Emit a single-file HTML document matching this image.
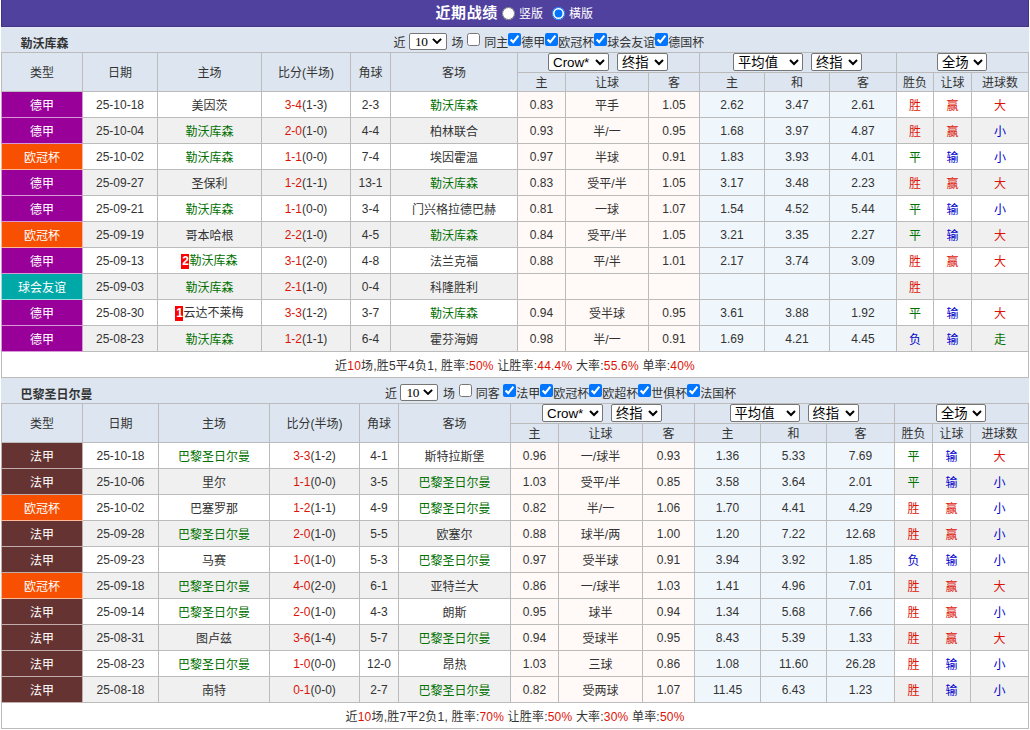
<!DOCTYPE html>
<html lang="zh-CN"><head><meta charset="utf-8"><title>近期战绩</title>
<style>
html,body{margin:0;padding:0;background:#fff;}
body{width:1030px;font-family:"Liberation Sans","Noto Sans CJK SC",sans-serif;font-size:12px;color:#333;}
.title{height:26px;width:1026px;margin-left:1px;border:1px solid #433480;border-top:0;background:#51419f;color:#fff;font-size:12px;position:relative;}
.title b{position:absolute;left:433.5px;top:2px;font-size:15px;line-height:22px;letter-spacing:0.6px;}
.title input{position:absolute;margin:0;width:13px;height:13px;top:6.5px;}
.title .r1{left:500px;}
.title .r2{left:550px;}
.title span{position:absolute;top:5px;line-height:18px;}
.title .l1t{left:517px;}
.title .l2t{left:567px;}
.bar{height:25px;background:#dde6f0;position:relative;margin:0 1px;box-sizing:border-box;}
.bar.first{border-top:1px solid #e6e6fa;}
.bar.first .tn{margin-top:-1px;}
.bar.first .f{margin-top:-1px;}
.bar .tn{position:absolute;left:19.5px;top:8.5px;font-weight:bold;color:#333;line-height:16px;}
.bar .f{position:absolute;top:8px;line-height:17px;white-space:nowrap;}
.bar input{margin:0;vertical-align:top;width:13px;height:13px;position:relative;top:-2px;}
.bar .c0{margin:0 4px 0 3.7px;}
select{font-size:13.33px;padding:0;margin:0;height:18px;box-sizing:border-box;border:1px solid #767676;border-radius:2px;background:#fff;color:#000;font-family:"Liberation Sans","Noto Sans CJK SC",sans-serif;}
.s0{display:inline-block;box-sizing:border-box;width:38px;height:17px;margin:0 5px 0 3px;vertical-align:top;position:relative;top:-2px;border:1px solid #767676;border-radius:2px;background:#fff;color:#000;}
.s0 span{position:absolute;left:5.5px;top:-1px;letter-spacing:-0.4px;font:13.33px/17px "Liberation Serif",serif;}
.s0 svg{position:absolute;left:22px;top:3.5px;}
.s1{width:61px;margin-right:8px;}
.s2{width:51px;}
.s3{width:70px;margin-right:8px;}
.s4{width:50px;}
table.t{border-collapse:collapse;table-layout:fixed;width:1028px;margin-left:1px;}
table.t td,table.t th{border:1px solid #bbb;text-align:center;padding:0;font-weight:normal;height:25px;overflow:hidden;white-space:nowrap;}
table.t th{background:#dde6f0;}
table.t td{height:25px;padding-bottom:0px;}
tr.h1 th[rowspan]{padding-bottom:2px;}
tr.h1 th{height:19px;}
tr.h1 th select{position:relative;top:-0.5px;left:-0.5px;}
tr.h2 th{height:16px;line-height:16px;padding-top:2px;}
tr.alt td{background:#f0f0f0;}
table.t td.o1{background:#fffaf7;}
table.t td.o2{background:#f0f7fc;}
table.t td.l1{background:#990099;color:#fff;border-color:#d699d6;}
table.t td.l2{background:#f75000;color:#fff;border-color:#fcb999;}
table.t td.l3{background:#00a8a8;color:#fff;border-color:#a1dcdc;}
table.t td.l4{background:#663333;color:#fff;border-color:#c2adad;}
.r{color:#dc1408;}
.gn{color:#007000;}
.b{color:#0000cc;}
.cd{background:#f00;color:#fff;font-weight:bold;display:inline-block;width:8px;height:15px;line-height:15px;vertical-align:middle;position:relative;top:-0.5px;}
tr.sum td{height:25px;background:#fff;letter-spacing:0.2px;}
.gap{height:0;}

</style></head><body>
<div class="title"><b>近期战绩</b><input type="radio" name="v" class="r1"><span class="l1t">竖版</span><input type="radio" name="v" class="r2" checked><span class="l2t">橫版</span></div>
<div class="bar first"><span class="tn">勒沃库森</span><span class="f" style="left:392.5px">近<span class="s0"><span>10</span><svg width="10" height="6" viewBox="0 0 10 6"><path d="M0.9 0.9 L5 4.9 L9.1 0.9" fill="none" stroke="#000" stroke-width="2"/></svg></span>场<input type="checkbox" class="c0"><span class="sd" style="margin-right:0px">同主</span><input type="checkbox" checked>德甲<input type="checkbox" checked>欧冠杯<input type="checkbox" checked>球会友谊<input type="checkbox" checked>德国杯</span></div>
<table class="t" id="t1"><colgroup><col style="width:81px"><col style="width:75px"><col style="width:104px"><col style="width:89px"><col style="width:40px"><col style="width:127px"><col style="width:48px"><col style="width:83px"><col style="width:51px"><col style="width:65px"><col style="width:65px"><col style="width:67px"><col style="width:37px"><col style="width:38px"><col style="width:57px"></colgroup>
<tr class="h1"><th rowspan="2">类型</th><th rowspan="2">日期</th><th rowspan="2">主场</th><th rowspan="2">比分(半场)</th><th rowspan="2">角球</th><th rowspan="2">客场</th><th colspan="3"><select class="s1"><option>Crow*</option></select><select class="s2"><option>终指</option></select></th><th colspan="3"><select class="s3"><option>平均值</option></select><select class="s2"><option>终指</option></select></th><th colspan="3"><select class="s4"><option>全场</option></select></th></tr>
<tr class="h2"><th>主</th><th>让球</th><th>客</th><th>主</th><th>和</th><th>客</th><th>胜负</th><th>让球</th><th>进球数</th></tr>
<tr><td class="l1">德甲</td><td>25-10-18</td><td>美因茨</td><td><span class="r">3-4</span>(1-3)</td><td>2-3</td><td><span class="gn">勒沃库森</span></td><td class="o1">0.83</td><td class="o1">平手</td><td class="o1">1.05</td><td class="o2">2.62</td><td class="o2">3.47</td><td class="o2">2.61</td><td class="r">胜</td><td class="r">赢</td><td class="r">大</td></tr>
<tr class="alt"><td class="l1">德甲</td><td>25-10-04</td><td><span class="gn">勒沃库森</span></td><td><span class="r">2-0</span>(1-0)</td><td>4-4</td><td>柏林联合</td><td class="o1">0.93</td><td class="o1">半/一</td><td class="o1">0.95</td><td class="o2">1.68</td><td class="o2">3.97</td><td class="o2">4.87</td><td class="r">胜</td><td class="r">赢</td><td class="b">小</td></tr>
<tr><td class="l2">欧冠杯</td><td>25-10-02</td><td><span class="gn">勒沃库森</span></td><td><span class="r">1-1</span>(0-0)</td><td>7-4</td><td>埃因霍温</td><td class="o1">0.97</td><td class="o1">半球</td><td class="o1">0.91</td><td class="o2">1.83</td><td class="o2">3.93</td><td class="o2">4.01</td><td class="gn">平</td><td class="b">输</td><td class="b">小</td></tr>
<tr class="alt"><td class="l1">德甲</td><td>25-09-27</td><td>圣保利</td><td><span class="r">1-2</span>(1-1)</td><td>13-1</td><td><span class="gn">勒沃库森</span></td><td class="o1">0.83</td><td class="o1">受平/半</td><td class="o1">1.05</td><td class="o2">3.17</td><td class="o2">3.48</td><td class="o2">2.23</td><td class="r">胜</td><td class="r">赢</td><td class="r">大</td></tr>
<tr><td class="l1">德甲</td><td>25-09-21</td><td><span class="gn">勒沃库森</span></td><td><span class="r">1-1</span>(0-0)</td><td>3-4</td><td>门兴格拉德巴赫</td><td class="o1">0.81</td><td class="o1">一球</td><td class="o1">1.07</td><td class="o2">1.54</td><td class="o2">4.52</td><td class="o2">5.44</td><td class="gn">平</td><td class="b">输</td><td class="b">小</td></tr>
<tr class="alt"><td class="l2">欧冠杯</td><td>25-09-19</td><td>哥本哈根</td><td><span class="r">2-2</span>(1-0)</td><td>4-5</td><td><span class="gn">勒沃库森</span></td><td class="o1">0.84</td><td class="o1">受平/半</td><td class="o1">1.05</td><td class="o2">3.21</td><td class="o2">3.35</td><td class="o2">2.27</td><td class="gn">平</td><td class="b">输</td><td class="r">大</td></tr>
<tr><td class="l1">德甲</td><td>25-09-13</td><td><span class="cd">2</span><span class="gn">勒沃库森</span></td><td><span class="r">3-1</span>(2-0)</td><td>4-8</td><td>法兰克福</td><td class="o1">0.88</td><td class="o1">平/半</td><td class="o1">1.01</td><td class="o2">2.17</td><td class="o2">3.74</td><td class="o2">3.09</td><td class="r">胜</td><td class="r">赢</td><td class="r">大</td></tr>
<tr class="alt"><td class="l3">球会友谊</td><td>25-09-03</td><td><span class="gn">勒沃库森</span></td><td><span class="r">2-1</span>(1-0)</td><td>0-4</td><td>科隆胜利</td><td class="o1"></td><td class="o1"></td><td class="o1"></td><td class="o2"></td><td class="o2"></td><td class="o2"></td><td class="r">胜</td><td></td><td></td></tr>
<tr><td class="l1">德甲</td><td>25-08-30</td><td><span class="cd">1</span>云达不莱梅</td><td><span class="r">3-3</span>(1-2)</td><td>3-7</td><td><span class="gn">勒沃库森</span></td><td class="o1">0.94</td><td class="o1">受半球</td><td class="o1">0.95</td><td class="o2">3.61</td><td class="o2">3.88</td><td class="o2">1.92</td><td class="gn">平</td><td class="b">输</td><td class="r">大</td></tr>
<tr class="alt"><td class="l1">德甲</td><td>25-08-23</td><td><span class="gn">勒沃库森</span></td><td><span class="r">1-2</span>(1-1)</td><td>6-4</td><td>霍芬海姆</td><td class="o1">0.98</td><td class="o1">半/一</td><td class="o1">0.91</td><td class="o2">1.69</td><td class="o2">4.21</td><td class="o2">4.45</td><td class="b">负</td><td class="b">输</td><td class="gn">走</td></tr>
<tr class="sum"><td colspan="15">近<span class="r">10</span>场,胜5平4负1, 胜率:<span class="r">50%</span> 让胜率:<span class="r">44.4%</span> 大率:<span class="r">55.6%</span> 单率:<span class="r">40%</span></td></tr></table>
<div class="gap"></div>
<div class="bar"><span class="tn">巴黎圣日尔曼</span><span class="f" style="left:384px">近<span class="s0"><span>10</span><svg width="10" height="6" viewBox="0 0 10 6"><path d="M0.9 0.9 L5 4.9 L9.1 0.9" fill="none" stroke="#000" stroke-width="2"/></svg></span>场<input type="checkbox" class="c0"><span class="sd" style="margin-right:3.5px">同客</span><input type="checkbox" checked>法甲<input type="checkbox" checked>欧冠杯<input type="checkbox" checked>欧超杯<input type="checkbox" checked>世俱杯<input type="checkbox" checked>法国杯</span></div>
<table class="t" id="t2"><colgroup><col style="width:81px"><col style="width:76px"><col style="width:111px"><col style="width:90px"><col style="width:39px"><col style="width:112px"><col style="width:48px"><col style="width:84px"><col style="width:52px"><col style="width:66px"><col style="width:66px"><col style="width:68px"><col style="width:38px"><col style="width:38px"><col style="width:58px"></colgroup>
<tr class="h1"><th rowspan="2">类型</th><th rowspan="2">日期</th><th rowspan="2">主场</th><th rowspan="2">比分(半场)</th><th rowspan="2">角球</th><th rowspan="2">客场</th><th colspan="3"><select class="s1"><option>Crow*</option></select><select class="s2"><option>终指</option></select></th><th colspan="3"><select class="s3"><option>平均值</option></select><select class="s2"><option>终指</option></select></th><th colspan="3"><select class="s4"><option>全场</option></select></th></tr>
<tr class="h2"><th>主</th><th>让球</th><th>客</th><th>主</th><th>和</th><th>客</th><th>胜负</th><th>让球</th><th>进球数</th></tr>
<tr><td class="l4">法甲</td><td>25-10-18</td><td><span class="gn">巴黎圣日尔曼</span></td><td><span class="r">3-3</span>(1-2)</td><td>4-1</td><td>斯特拉斯堡</td><td class="o1">0.96</td><td class="o1">一/球半</td><td class="o1">0.93</td><td class="o2">1.36</td><td class="o2">5.33</td><td class="o2">7.69</td><td class="gn">平</td><td class="b">输</td><td class="r">大</td></tr>
<tr class="alt"><td class="l4">法甲</td><td>25-10-06</td><td>里尔</td><td><span class="r">1-1</span>(0-0)</td><td>3-5</td><td><span class="gn">巴黎圣日尔曼</span></td><td class="o1">1.03</td><td class="o1">受平/半</td><td class="o1">0.85</td><td class="o2">3.58</td><td class="o2">3.64</td><td class="o2">2.01</td><td class="gn">平</td><td class="b">输</td><td class="b">小</td></tr>
<tr><td class="l2">欧冠杯</td><td>25-10-02</td><td>巴塞罗那</td><td><span class="r">1-2</span>(1-1)</td><td>4-9</td><td><span class="gn">巴黎圣日尔曼</span></td><td class="o1">0.82</td><td class="o1">半/一</td><td class="o1">1.06</td><td class="o2">1.70</td><td class="o2">4.41</td><td class="o2">4.29</td><td class="r">胜</td><td class="r">赢</td><td class="b">小</td></tr>
<tr class="alt"><td class="l4">法甲</td><td>25-09-28</td><td><span class="gn">巴黎圣日尔曼</span></td><td><span class="r">2-0</span>(1-0)</td><td>5-5</td><td>欧塞尔</td><td class="o1">0.88</td><td class="o1">球半/两</td><td class="o1">1.00</td><td class="o2">1.20</td><td class="o2">7.22</td><td class="o2">12.68</td><td class="r">胜</td><td class="r">赢</td><td class="b">小</td></tr>
<tr><td class="l4">法甲</td><td>25-09-23</td><td>马赛</td><td><span class="r">1-0</span>(1-0)</td><td>5-3</td><td><span class="gn">巴黎圣日尔曼</span></td><td class="o1">0.97</td><td class="o1">受半球</td><td class="o1">0.91</td><td class="o2">3.94</td><td class="o2">3.92</td><td class="o2">1.85</td><td class="b">负</td><td class="b">输</td><td class="b">小</td></tr>
<tr class="alt"><td class="l2">欧冠杯</td><td>25-09-18</td><td><span class="gn">巴黎圣日尔曼</span></td><td><span class="r">4-0</span>(2-0)</td><td>6-1</td><td>亚特兰大</td><td class="o1">0.86</td><td class="o1">一/球半</td><td class="o1">1.03</td><td class="o2">1.41</td><td class="o2">4.96</td><td class="o2">7.01</td><td class="r">胜</td><td class="r">赢</td><td class="r">大</td></tr>
<tr><td class="l4">法甲</td><td>25-09-14</td><td><span class="gn">巴黎圣日尔曼</span></td><td><span class="r">2-0</span>(1-0)</td><td>4-3</td><td>朗斯</td><td class="o1">0.95</td><td class="o1">球半</td><td class="o1">0.94</td><td class="o2">1.34</td><td class="o2">5.68</td><td class="o2">7.66</td><td class="r">胜</td><td class="r">赢</td><td class="b">小</td></tr>
<tr class="alt"><td class="l4">法甲</td><td>25-08-31</td><td>图卢兹</td><td><span class="r">3-6</span>(1-4)</td><td>5-7</td><td><span class="gn">巴黎圣日尔曼</span></td><td class="o1">0.94</td><td class="o1">受球半</td><td class="o1">0.95</td><td class="o2">8.43</td><td class="o2">5.39</td><td class="o2">1.33</td><td class="r">胜</td><td class="r">赢</td><td class="r">大</td></tr>
<tr><td class="l4">法甲</td><td>25-08-23</td><td><span class="gn">巴黎圣日尔曼</span></td><td><span class="r">1-0</span>(0-0)</td><td>12-0</td><td>昂热</td><td class="o1">1.03</td><td class="o1">三球</td><td class="o1">0.86</td><td class="o2">1.08</td><td class="o2">11.60</td><td class="o2">26.28</td><td class="r">胜</td><td class="b">输</td><td class="b">小</td></tr>
<tr class="alt"><td class="l4">法甲</td><td>25-08-18</td><td>南特</td><td><span class="r">0-1</span>(0-0)</td><td>2-7</td><td><span class="gn">巴黎圣日尔曼</span></td><td class="o1">0.82</td><td class="o1">受两球</td><td class="o1">1.07</td><td class="o2">11.45</td><td class="o2">6.43</td><td class="o2">1.23</td><td class="r">胜</td><td class="b">输</td><td class="b">小</td></tr>
<tr class="sum"><td colspan="15">近<span class="r">10</span>场,胜7平2负1, 胜率:<span class="r">70%</span> 让胜率:<span class="r">50%</span> 大率:<span class="r">30%</span> 单率:<span class="r">50%</span></td></tr></table>
</body></html>
